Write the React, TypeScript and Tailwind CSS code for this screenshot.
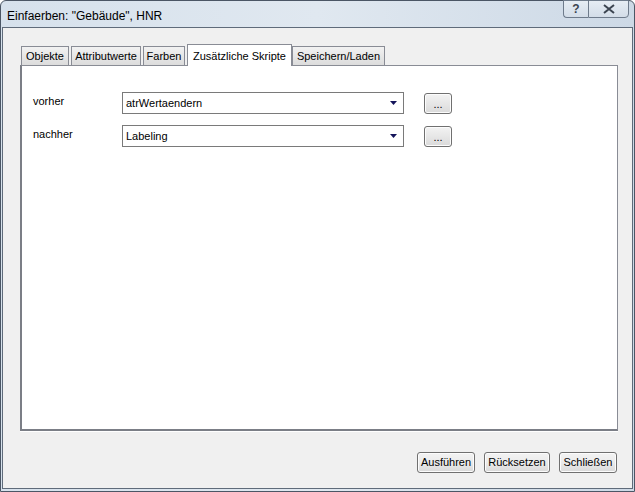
import { JSX } from "react";

interface TabProps {
  label: string;
  width: string;
  active?: boolean;
}

function Tab({ label, width, active = false }: TabProps): JSX.Element {
  if (active) {
    return (
      <div
        className={`${width} h-[22px] -mb-px relative z-10 bg-white border border-b-0 border-[#898c95] flex items-start justify-center pt-[3px]`}
      >
        {label}
      </div>
    );
  }
  return (
    <div
      className={`${width} h-[19px] mr-[2px] border border-b-0 border-[#898c95] bg-gradient-to-b from-[#f2f2f2] to-[#dcdcdc] flex items-center justify-center pt-[1px]`}
    >
      {label}
    </div>
  );
}

function Combo({ value }: { value: string }): JSX.Element {
  return (
    <div className="w-[282px] h-[22px] border border-[#7a7a7a] bg-white flex items-center pl-[3px] pr-[6px]">
      <span className="flex-1">{value}</span>
      <svg width="7" height="4" viewBox="0 0 7 4">
        <polygon points="0,0 7,0 3.5,4" fill="#14145a" />
      </svg>
    </div>
  );
}

function Knopf({ label, width }: { label: string; width: string }): JSX.Element {
  return (
    <button
      className={`${width} h-[21px] rounded-[3px] border border-[#707070] bg-gradient-to-b from-[#f3f3f3] via-[#ebebeb] to-[#d9d9d9] flex items-center justify-center shadow-[inset_0_0_0_1px_#fcfcfc]`}
    >
      {label}
    </button>
  );
}

function ScriptRow({ label, value }: { label: string; value: string }): JSX.Element {
  return (
    <div className="flex items-center">
      <span className="w-[89px] -mt-[3px]">{label}</span>
      <Combo value={value} />
      <button className="ml-[20px] mt-[1px] w-[28px] h-[21px] rounded-[3px] border border-[#707070] bg-gradient-to-b from-[#f3f3f3] to-[#dadada] shadow-[inset_0_0_0_1px_#fcfcfc] flex items-end justify-center pb-[3px] leading-none">
        ...
      </button>
    </div>
  );
}

export default function App(): JSX.Element {
  return (
    <div
      className="w-[635px] h-[492px] flex flex-col border border-[#4b5665] rounded-t-[6px] bg-gradient-to-r from-[#d6e1ec] via-[#e0e8f0] to-[#cdd9e6] text-[11px] text-black"
      style={{ fontFamily: '"Liberation Sans", Arial, sans-serif' }}
    >
      <div className="h-[26px] flex justify-between items-start pl-[6px]">
        <span className="text-[12px] mt-[6px]">Einfaerben: "Gebäude", HNR</span>
        <div className="flex mr-[5px] -mt-px">
          <div className="w-[25px] h-[18px] border border-[#6e7b8b] border-r-0 rounded-bl-[4px] bg-gradient-to-b from-[#e6edf4] to-[#d3dde8] flex items-center justify-center text-[12px] font-bold text-[#3b4450]">
            ?
          </div>
          <div className="w-[41px] h-[18px] border border-[#6e7b8b] rounded-br-[4px] bg-gradient-to-b from-[#e6edf4] to-[#d3dde8] flex items-center justify-center">
            <svg width="12" height="10" viewBox="0 0 12 10">
              <path d="M1 1 L11 9 M11 1 L1 9" stroke="#3b4450" strokeWidth="2" fill="none" />
            </svg>
          </div>
        </div>
      </div>
      <div className="flex-1 mx-[1px] mb-[2px] border border-[#5f6b7a] bg-[#f0f0f0] flex flex-col pl-[17px] pr-[14px] pt-[16px]">
        <div className="flex items-end pl-[1px]">
          <Tab label="Objekte" width="w-[48px]" />
          <Tab label="Attributwerte" width="w-[70px]" />
          <Tab label="Farben" width="w-[42px]" />
          <Tab label="Zusätzliche Skripte" width="w-[105px]" active />
          <Tab label="Speichern/Laden" width="w-[93px]" />
        </div>
        <div className="h-[366px] border border-[#898c95] border-l-2 border-b-2 border-l-[#7b7e86] border-b-[#7b7e86] bg-white flex flex-col gap-[11px] pl-[11px] pt-[26px] shadow-[0_1px_0_#ffffff]">
          <ScriptRow label="vorher" value="atrWertaendern" />
          <ScriptRow label="nachher" value="Labeling" />
        </div>
        <div className="flex justify-end gap-[9px] mt-[21px] pr-[1px]">
          <Knopf label="Ausführen" width="w-[58px]" />
          <Knopf label="Rücksetzen" width="w-[66px]" />
          <Knopf label="Schließen" width="w-[58px]" />
        </div>
      </div>
    </div>
  );
}
